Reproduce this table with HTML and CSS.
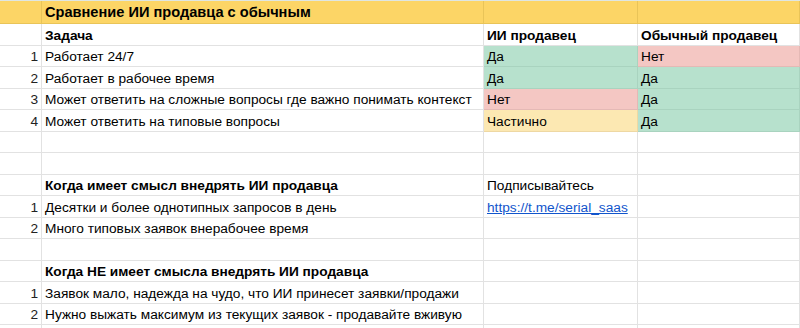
FILE: index.html
```html
<!DOCTYPE html>
<html lang="ru">
<head>
<meta charset="utf-8">
<link rel="stylesheet" href="styles.css">
</head>
<body>
<div class="sheet">
  <div class="row r-title">
    <div class="c n"></div><div class="c b title">Сравнение ИИ продавца с обычным</div><div class="c"></div><div class="c"></div>
  </div>
  <div class="row">
    <div class="c n"></div><div class="c b">Задача</div><div class="c b">ИИ продавец</div><div class="c b">Обычный продавец</div>
  </div>
  <div class="row">
    <div class="c n">1</div><div class="c">Работает 24/7</div><div class="c green">Да</div><div class="c red">Нет</div>
  </div>
  <div class="row">
    <div class="c n">2</div><div class="c">Работает в рабочее время</div><div class="c green">Да</div><div class="c green">Да</div>
  </div>
  <div class="row">
    <div class="c n">3</div><div class="c">Может ответить на сложные вопросы где важно понимать контекст</div><div class="c red">Нет</div><div class="c green">Да</div>
  </div>
  <div class="row">
    <div class="c n">4</div><div class="c">Может ответить на типовые вопросы</div><div class="c yellow">Частично</div><div class="c green">Да</div>
  </div>
  <div class="row">
    <div class="c n"></div><div class="c"></div><div class="c"></div><div class="c"></div>
  </div>
  <div class="row">
    <div class="c n"></div><div class="c"></div><div class="c"></div><div class="c"></div>
  </div>
  <div class="row">
    <div class="c n"></div><div class="c b">Когда имеет смысл внедрять ИИ продавца</div><div class="c">Подписывайтесь</div><div class="c"></div>
  </div>
  <div class="row">
    <div class="c n">1</div><div class="c">Десятки и более однотипных запросов в день</div><div class="c"><a class="link" href="#">https://t.me/serial_saas</a></div><div class="c"></div>
  </div>
  <div class="row">
    <div class="c n">2</div><div class="c">Много типовых заявок внерабочее время</div><div class="c"></div><div class="c"></div>
  </div>
  <div class="row">
    <div class="c n"></div><div class="c"></div><div class="c"></div><div class="c"></div>
  </div>
  <div class="row">
    <div class="c n"></div><div class="c b">Когда НЕ имеет смысла внедрять ИИ продавца</div><div class="c"></div><div class="c"></div>
  </div>
  <div class="row">
    <div class="c n">1</div><div class="c">Заявок мало, надежда на чудо, что ИИ принесет заявки/продажи</div><div class="c"></div><div class="c"></div>
  </div>
  <div class="row">
    <div class="c n">2</div><div class="c">Нужно выжать максимум из текущих заявок - продавайте вживую</div><div class="c"></div><div class="c"></div>
  </div>
  <div class="row">
    <div class="c n"></div><div class="c"></div><div class="c"></div><div class="c"></div>
  </div>
</div>
</body>
</html>
```

FILE: styles.css
```css
html, body {
  margin: 0;
  padding: 0;
  background: #ffffff;
  overflow: hidden;
}
.sheet {
  width: 800px;
  border-top: 1px solid #dfe6e2;
  font-family: "Liberation Sans", Arial, sans-serif;
  font-size: 13.7px;
  color: #000;
}
.row {
  display: grid;
  grid-template-columns: 42px 442px 154px 162px;
  height: 21.5px;
}
.row.r-title {
  height: 23px;
  background: #fcd566;
}
.c {
  box-sizing: border-box;
  border-right: 1px solid #e2e2e2;
  border-bottom: 1px solid #e2e2e2;
  padding: 0 3px 2px 3px;
  display: flex;
  align-items: flex-end;
  white-space: nowrap;
  overflow: visible;
  line-height: 15px;
}
.r-title .c {
  border-color: #e9c458;
}
.c.n {
  justify-content: flex-end;
  padding-right: 3px;
  color: #222;
}
.b {
  font-weight: bold;
  font-size: 13.7px;
}
.b.title {
  font-size: 14.6px;
  padding-bottom: 3px;
}
.green { background: #b7e1cd; border-color: #a9d3bf; }
.red { background: #f4c7c3; border-color: #e4b9b5; }
.yellow { background: #fce8b2; border-color: #eed8a3; }
.link {
  color: #1155cc;
  text-decoration: underline;
}
```
